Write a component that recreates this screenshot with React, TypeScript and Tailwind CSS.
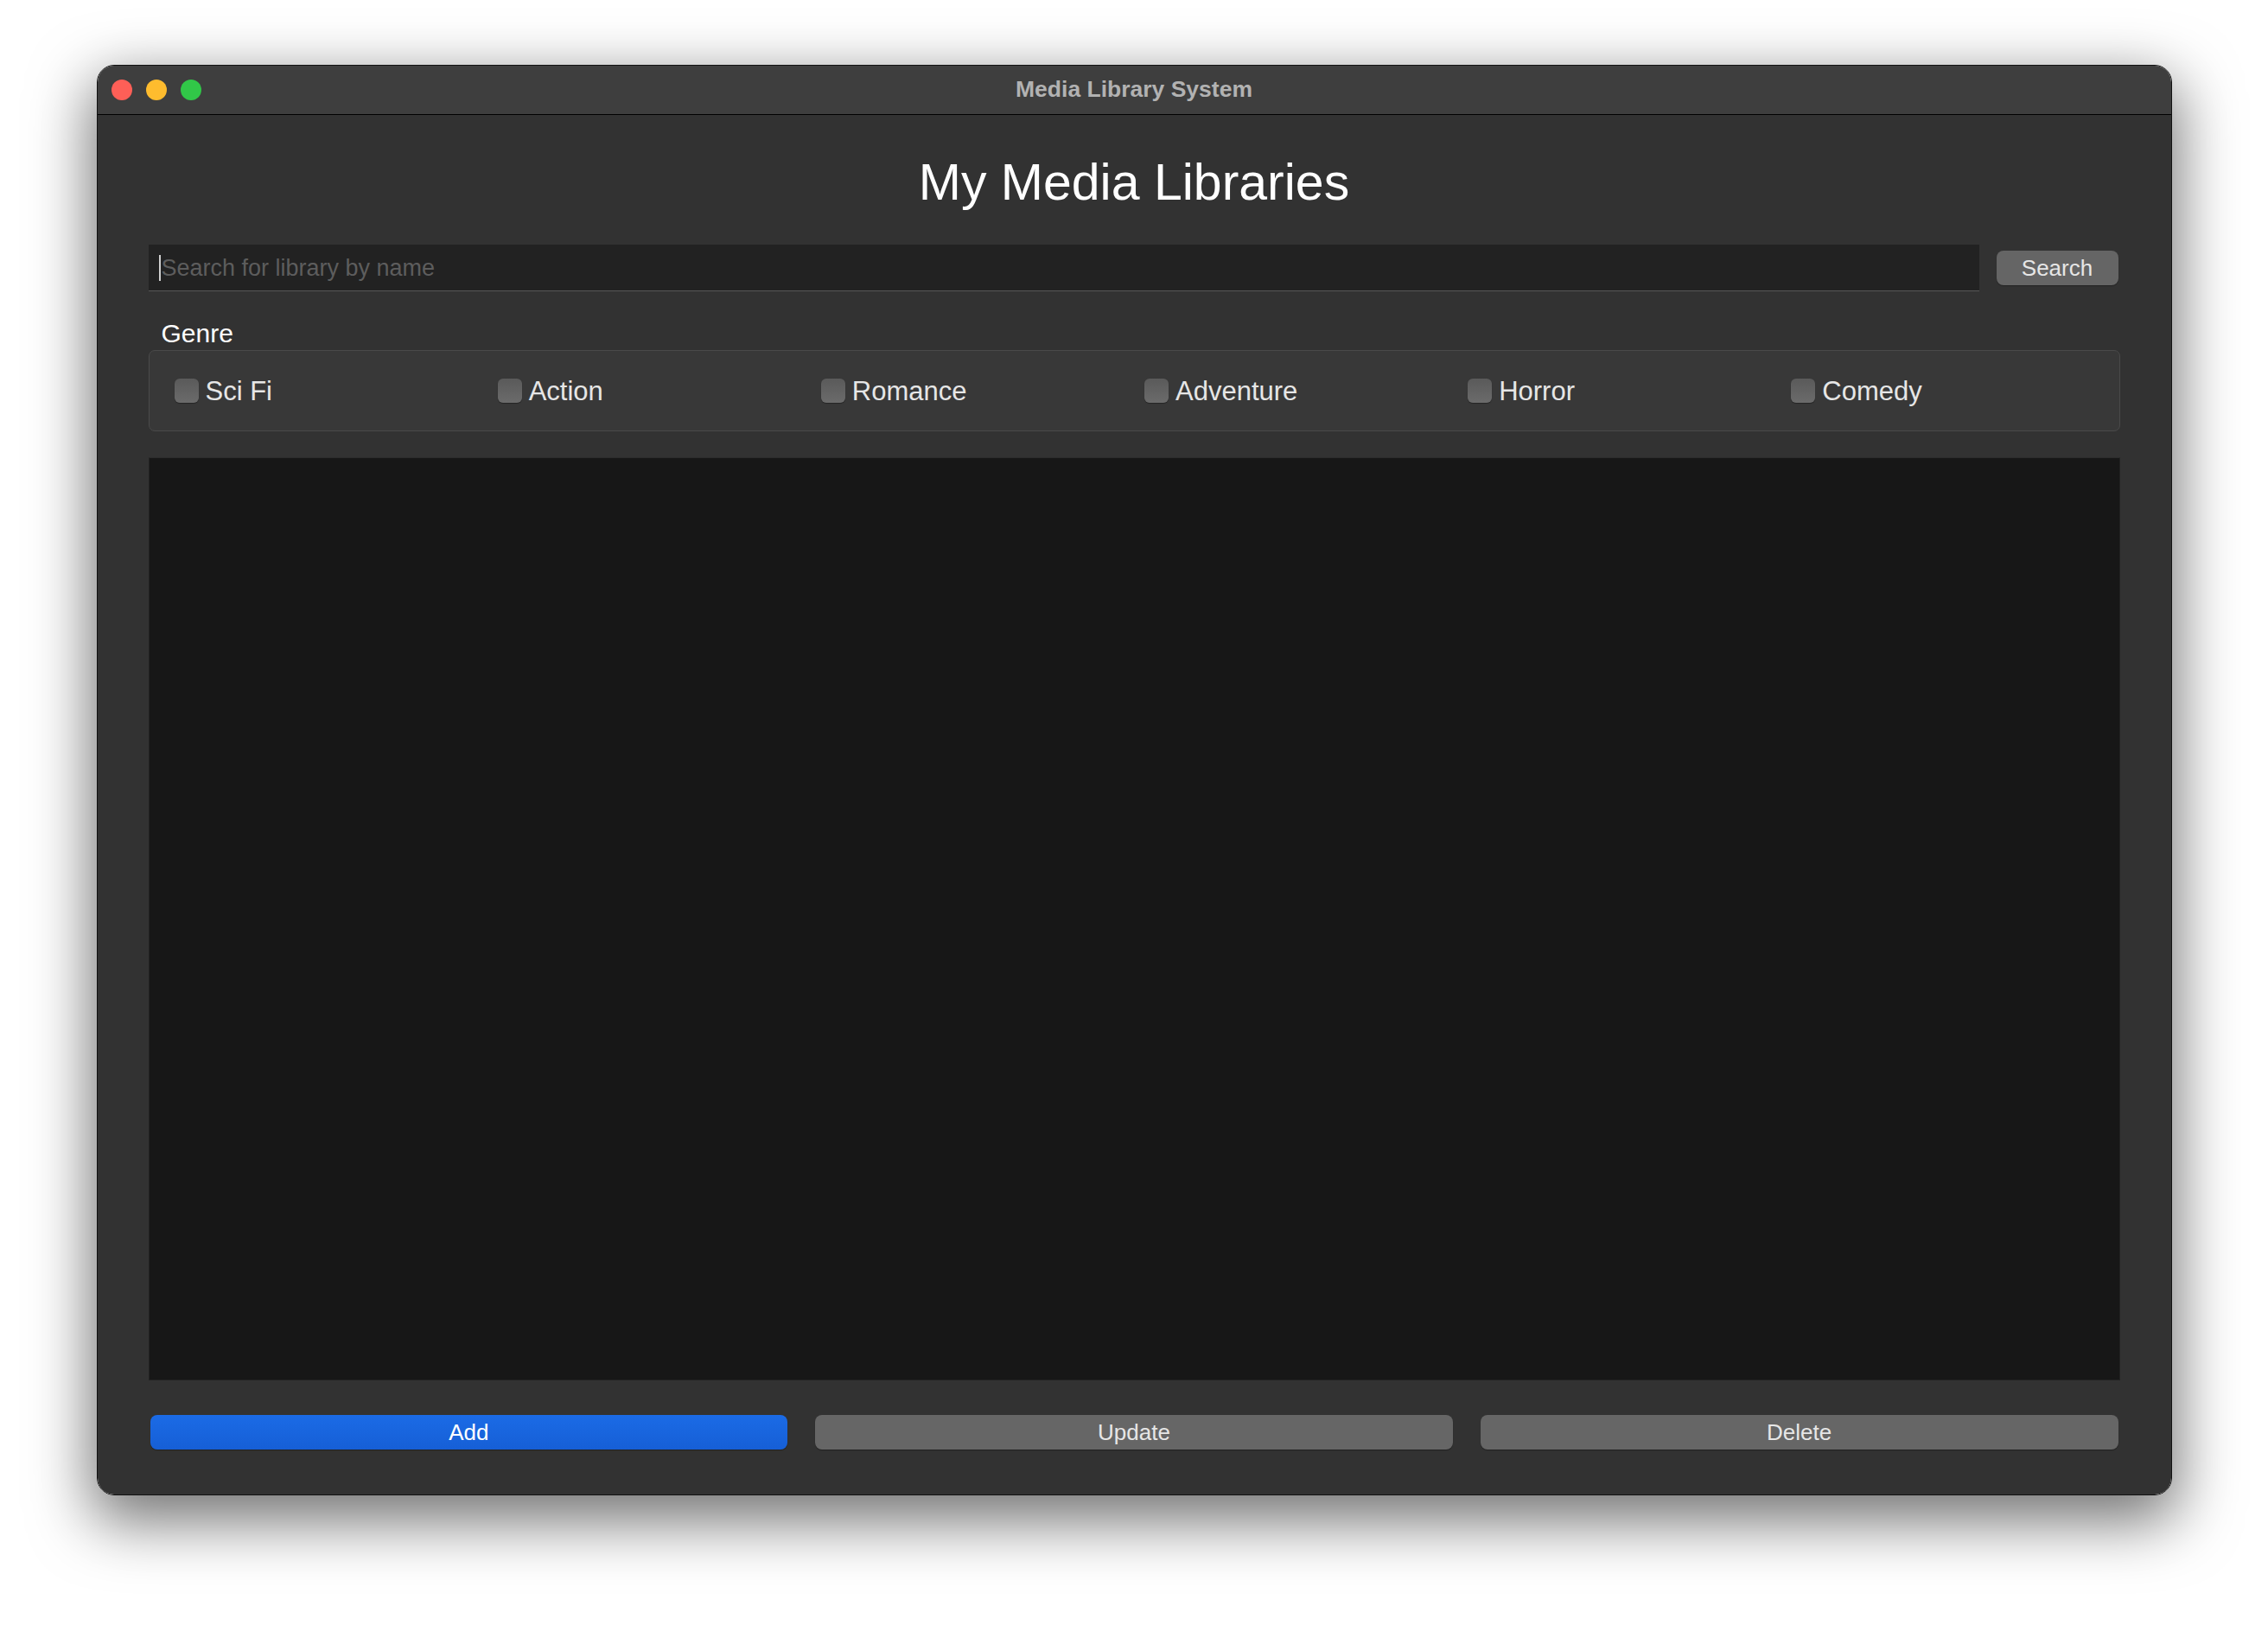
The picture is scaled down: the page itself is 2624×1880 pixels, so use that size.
const genres = ["Sci Fi", "Action", "Romance", "Adventure", "Horror", "Comedy"];

const font = { fontFamily: '"Liberation Sans", Arial, sans-serif' };

const TitleBar = () => {
  return (
    <div className="relative flex h-[57px] items-center gap-[16px] border-b border-black bg-[#3e3e3e] pl-[16px]">
      <span className="h-[24px] w-[24px] rounded-full bg-[#fe5f57]" />
      <span className="h-[24px] w-[24px] rounded-full bg-[#febc2e]" />
      <span className="h-[24px] w-[24px] rounded-full bg-[#31c748]" />
      <div className="absolute inset-0 flex items-center justify-center pb-[1px] text-[26.5px] font-bold text-[#b2b2b2]">
        Media Library System
      </div>
    </div>
  );
};

const GenreBox = () => {
  return (
    <div className="mt-[2px] grid h-[94px] grid-cols-6 items-center rounded-[7px] border border-[#4a4a4a] bg-[#383838] pl-[29px] pr-[5px]">
      {genres.map((g) => (
        <label key={g} className="flex items-center gap-[8px]">
          <span className="h-[28px] w-[28px] rounded-[6px] bg-linear-to-b from-[#5a5a5a] to-[#6b6b6b] shadow-[0_1px_1px_rgba(0,0,0,0.35)]" />
          <span className="pt-[2px] text-[31px] leading-[36px] text-[#e6e6e6]">{g}</span>
        </label>
      ))}
    </div>
  );
};

export default function App() {
  return (
    <div className="flex min-h-screen justify-center bg-white pt-[75px]" style={font}>
      <div className="h-fit w-[2401px] overflow-hidden rounded-[20px] border border-[#111] shadow-[0_24px_70px_6px_rgba(0,0,0,0.55)]">
        <TitleBar />
        <div className="flex flex-col bg-[#323232] px-[59px] pb-[52px]">
          <h1 className="mt-[42px] text-center text-[59px] leading-[72px] text-white">
            My Media Libraries
          </h1>

          <div className="mt-[36px] flex items-center gap-[20px] pr-[2px]">
            <div className="flex h-[54px] flex-1 items-center border-b border-[#575757] bg-[#222222] pl-[12px]">
              <span className="h-[30px] w-[2px] bg-[#cfcfcf]" />
              <span className="pl-[1px] pt-[2px] text-[27px] text-[#5d5d5d]">Search for library by name</span>
            </div>
            <button className="h-[40px] w-[141px] rounded-[8px] bg-[#656565] pt-[1px] text-[26px] text-[#e6e6e6] shadow-[0_1px_1px_rgba(0,0,0,0.3)]">
              Search
            </button>
          </div>

          <div className="mt-[30px] pl-[15px] pt-[2px] text-[30px] leading-[34px] text-white">Genre</div>
          <GenreBox />

          <div className="mt-[30px] h-[1068px] border border-[#222] border-t-[#2c2c2c] bg-[#171717]" />

          <div className="mt-[40px] grid grid-cols-3 gap-[32px] px-[2px]">
            <button className="h-[40px] rounded-[8px] bg-linear-to-b from-[#1b6be6] to-[#165fd6] text-[26px] text-white shadow-[0_1px_1px_rgba(0,0,0,0.35)]">
              Add
            </button>
            <button className="h-[40px] rounded-[8px] bg-[#666666] text-[26px] text-[#e6e6e6] shadow-[0_1px_1px_rgba(0,0,0,0.35)]">
              Update
            </button>
            <button className="h-[40px] rounded-[8px] bg-[#666666] text-[26px] text-[#e6e6e6] shadow-[0_1px_1px_rgba(0,0,0,0.35)]">
              Delete
            </button>
          </div>
        </div>
      </div>
    </div>
  );
}
